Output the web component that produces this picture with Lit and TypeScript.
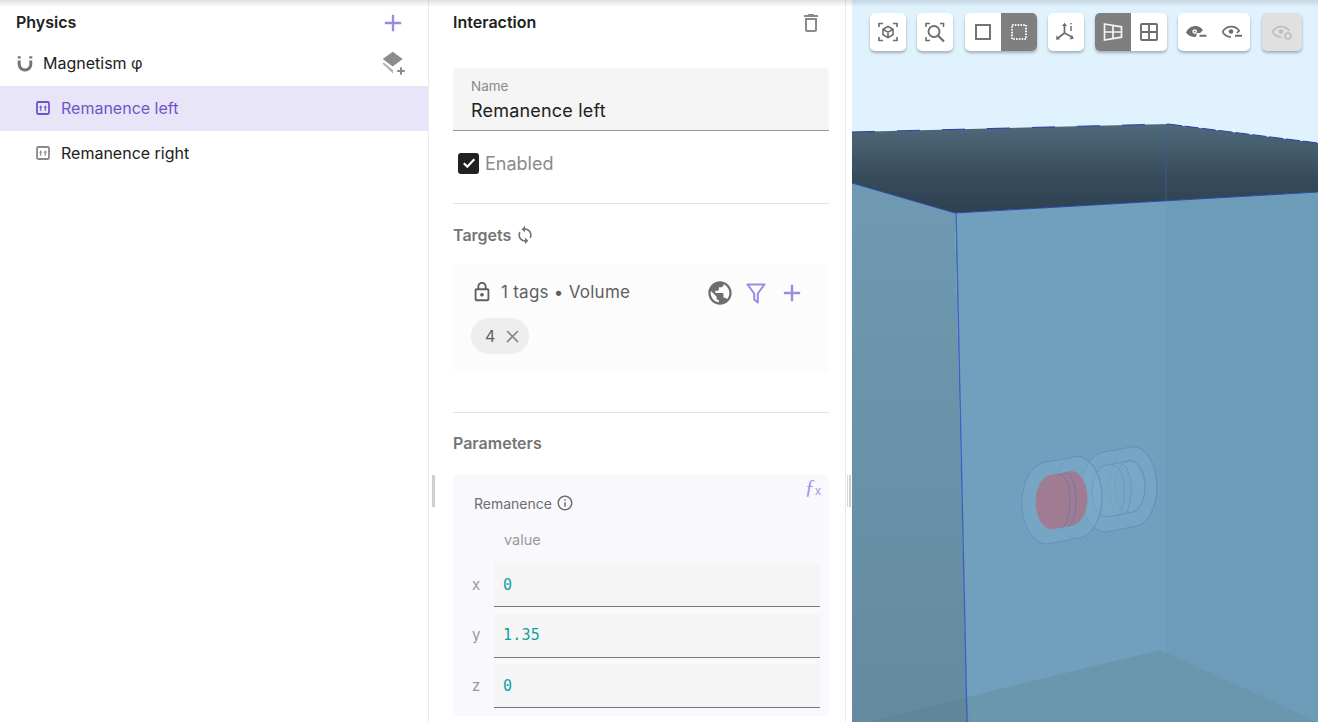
import { LitElement, html, css, svg } from "lit";
import { customElement } from "lit/decorators.js";

const P = {
  add: "M19 13h-6v6h-2v-6H5v-2h6V5h2v6h6v2z",
  trash: "M6 19c0 1.1.9 2 2 2h8c1.1 0 2-.9 2-2V7H6v12zM8 9h8v10H8V9zm7.5-5l-1-1h-5l-1 1H5v2h14V4h-3.5z",
  lock: "M18 8h-1V6c0-2.76-2.24-5-5-5S7 3.24 7 6v2H6c-1.1 0-2 .9-2 2v10c0 1.1.9 2 2 2h12c1.1 0 2-.9 2-2V10c0-1.1-.9-2-2-2zM9 6c0-1.66 1.34-3 3-3s3 1.34 3 3v2H9V6zm9 14H6V10h12v10zm-6-3c1.1 0 2-.9 2-2s-.9-2-2-2-2 .9-2 2 .9 2 2 2z",
  globe: "M12 2C6.48 2 2 6.48 2 12s4.48 10 10 10 10-4.48 10-10S17.52 2 12 2zm-1 17.93c-3.95-.49-7-3.85-7-7.93 0-.62.08-1.21.21-1.79L9 15v1c0 1.1.9 2 2 2v1.93zm6.9-2.54c-.26-.81-1-1.39-1.9-1.39h-1v-3c0-.55-.45-1-1-1H8v-2h2c.55 0 1-.45 1-1V7h2c1.1 0 2-.9 2-2v-.41c2.93 1.19 5 4.06 5 7.41 0 2.08-.8 3.97-2.1 5.39z",
  sync: "M12 4V1L8 5l4 4V6c3.31 0 6 2.69 6 6 0 1.01-.25 1.97-.7 2.8l1.46 1.46C19.54 15.03 20 13.57 20 12c0-4.42-3.58-8-8-8zm0 14c-3.31 0-6-2.69-6-6 0-1.01.25-1.97.7-2.8L5.24 7.74C4.46 8.97 4 10.43 4 12c0 4.42 3.58 8 8 8v3l4-4-4-4v3z",
  info: "M11 7h2v2h-2zm0 4h2v6h-2zm1-9C6.48 2 2 6.48 2 12s4.48 10 10 10 10-4.48 10-10S17.52 2 12 2zm0 18c-4.41 0-8-3.59-8-8s3.59-8 8-8 8 3.59 8 8-3.59 8-8 8z",
  close: "M19 6.41L17.59 5 12 10.59 6.41 5 5 6.41 10.59 12 5 17.59 6.41 19 12 13.41 17.59 19 19 17.59 13.41 12z",
};

const icon = (d: string, size: number, color: string) => html`<svg width=${size} height=${size} viewBox="0 0 24 24" fill=${color}><path d=${d}></path></svg>`;

const filterIcon = html`<svg width="28" height="28" viewBox="0 0 28 28" fill="none"><path d="M5.500 5.500h17L15.800 14.500v9l-3.600-3v-6z" stroke="#9b8be0" stroke-width="2" stroke-linejoin="round"/></svg>`;
const magnet = html`<svg width="18" height="18" viewBox="0 0 18 18" fill="none"><path d="M3.2 6.5v3.800a5.800 5.800 0 0 0 11.600 0V6.500" stroke="#757575" stroke-width="3"/><path d="M3.2 2.200v2.400M14.800 2.200v2.400" stroke="#757575" stroke-width="3"/></svg>`;
const layersAdd = html`<svg width="26" height="26" viewBox="0 0 26 26" fill="#8c8c8c"><path d="M13.700 1.700l10 7.400-5 3.700-5 3.700-10-7.400z"/><path d="M3.700 13.700l1-1.200 9.300 7.700v3.300z" opacity=".7"/><path d="M21 17.300h2v2.600h2.800v2H23v2.800h-2v-2.800h-2.800v-2H21z"/></svg>`;
const boxArrows = (c: string) => html`<svg width="14" height="14" viewBox="0 0 14 14" fill="none"><rect x="1" y="1" width="12" height="12" rx="1.200" stroke=${c} stroke-width="1.800"/><path d="M4.700 9.800V6.400M9.300 9.800V6.400" stroke=${c} stroke-width="1.200"/><path d="M3 6.800l1.700-2.600 1.700 2.600zM7.600 6.800l1.700-2.600L11 6.800z" fill=${c}/></svg>`;

const tb = (inner: unknown, color = "#6e6e6e") => html`<svg width="24" height="24" viewBox="0 0 24 24" fill="none" stroke=${color} stroke-width="1.700">${inner}</svg>`;
const corners = svg`<path d="M3 7V3.500h4M17 3.500h4V7M21 17v3.500h-4M7 20.500H3V17" stroke-width="1.600"/>`;

const icons = {
  cube: tb(svg`${corners}<path d="M12 6.500l5 2.800v5.500l-5 2.800-5-2.800V9.300zM7 9.300l5 2.800 5-2.800M12 12.100v5.500" stroke-width="1.600"/>`),
  zoom: tb(svg`<path d="M3 7V3.500h4M17 3.500h3.500V7M3 17v3.500h4" stroke-width="1.600"/><circle cx="11" cy="11.500" r="5.500" stroke-width="1.900"/><path d="M15 15.500l6 6" stroke-width="2.200"/>`),
  square: tb(svg`<rect x="5" y="5" width="14" height="14" stroke-width="1.900"/>`),
  dotted: tb(svg`<rect x="5" y="5" width="14" height="14" stroke-width="2" stroke-dasharray="1.600 1.200"/>`, "#f4f4f4"),
  axes: tb(svg`<path d="M10.500 13V4M10.500 13l-6.500 5M10.500 13l7.500 4" stroke-width="1.800"/><path d="M8 6l2.500-3.200L13 6zM2.500 15.500l-.5 4.300 4.200-.5zM15.500 19.500l4.300-.8-1.700-3.800z" fill="#6e6e6e" stroke="none"/><path d="M17 3v1.200M17 6v5" stroke-width="1.500"/>`),
  persp: tb(svg`<path d="M3.500 4l17 2.800v10.400L3.500 20zM3.500 12h17M12 5.500v13" stroke-width="1.700"/>`, "#f4f4f4"),
  grid: tb(svg`<rect x="4" y="4" width="16" height="16" rx="1" stroke-width="1.900"/><path d="M12 4v16M4 12h16" stroke-width="1.900"/>`),
  eyeFill: tb(svg`<path d="M2 12.500C4 8 8 6 11.500 6c2.900 0 5.500 1.400 7.500 4.200l-3 2.800H12.800c0 1-.3 2.800-1.300 4C7.500 17 4 15.500 2 12.500z" fill="#6e6e6e" stroke="none"/><circle cx="10.700" cy="11.600" r="2.300" fill="#fff" stroke="none"/><circle cx="10.700" cy="11.600" r=".9" fill="#6e6e6e" stroke="none"/><path d="M15.500 15.800h7" stroke-width="2"/>`),
  eyeLine: tb(svg`<path d="M2.500 12C4.500 8.300 8 6.700 11.500 6.700c3 0 5.800 1.500 7.600 4.100l-2.200 2M11 17c-3.500-.200-6.600-2-8.500-5" stroke-width="1.700"/><circle cx="11" cy="11.500" r="2.300" fill="#6e6e6e" stroke="none"/><path d="M15 15.800h7" stroke-width="2"/>`),
  eyeOff: tb(svg`<path d="M2.500 12C4.500 8.300 8 6.700 11.500 6.700c3 0 5.800 1.500 7.600 4.100M11 17c-3.500-.200-6.600-2-8.500-5" stroke-width="1.700"/><circle cx="11" cy="11.500" r="2.300" fill="#bdbdbd" stroke="none"/><circle cx="18" cy="16" r="3" stroke-width="1.500"/>`, "#bdbdbd"),
};

const cylinder = (cx0: number, cy0: number, w: number, rx: number, ry: number, fill: string, stroke = "#5b80c0", so = 0.55) => {
  const dy = -w * 0.19;
  const x1 = cx0 + w;
  const y1 = cy0 + dy;
  return svg`<path d="M${cx0} ${cy0 - ry}L${x1} ${y1 - ry}A${rx} ${ry} 0 0 1 ${x1} ${y1 + ry}L${cx0} ${cy0 + ry}A${rx} ${ry} 0 0 1 ${cx0} ${cy0 - ry}Z" fill=${fill} stroke=${stroke} stroke-opacity=${so} stroke-width="1"/>
  <ellipse cx=${x1} cy=${y1} rx=${rx} ry=${ry} fill="none" stroke=${stroke} stroke-opacity=${so * 0.4}/>`;
};

const scene = svg`<svg class="scene" viewBox="852 0 466 722" width="466" height="722">
  <defs>
    <linearGradient id="top" x1="0" y1="0" x2="0" y2="1"><stop offset="0" stop-color="#506a7b"/><stop offset=".6" stop-color="#364b5a"/><stop offset="1" stop-color="#2f4150"/></linearGradient>
    <linearGradient id="lw" x1="0" y1="0" x2="0" y2="1"><stop offset="0" stop-color="#6f9ab1"/><stop offset="1" stop-color="#648a9f"/></linearGradient>
  </defs>
  <rect x="852" y="0" width="466" height="722" fill="#e0f2fe"/>
  <polygon points="852,132 1168,124 1318,143 1318,192 955,213 852,183" fill="url(#top)"/>
  <polygon points="852,183 955,213 967,722 852,722" fill="url(#lw)"/>
  <polygon points="955,213 1318,192 1318,722 967,722" fill="#70a0bd"/>
  <polygon points="1166,200.800 1318,192 1318,722 1166,722" fill="#6d9cb9"/>
  <polygon points="868,722 967,697 969,722" fill="#618699"/>
  <polygon points="967,697 1160,650 1318,722 969,722" fill="#6a97ae"/>
  <path d="M852 132L1168 124" stroke="#2a3ea6" stroke-width="1" stroke-dasharray="23 22"/>
  <path d="M1168 124L1318 143" stroke="#2a3ea6" stroke-width="1" stroke-dasharray="14 3"/>
  <path d="M852 183L955 213L1318 192" stroke="#2b45a8" stroke-width="1" fill="none"/>
  <path d="M1166 125V200" stroke="#3a5f9c" stroke-width="1" stroke-opacity=".7"/>
  <path d="M956 213L967 722" stroke="#3d62c4" stroke-width="1.400"/>
  ${cylinder(1105, 492, 28, 24, 40, "#7fb0cc66")}
  ${cylinder(1107, 491, 23, 15, 26, "#7fb0cc40")}
  <path d="M1113 466A10 26 0 0 1 1118 516M1121 464A10 26 0 0 1 1125 514" fill="none" stroke="#6a8cc0" stroke-opacity=".7"/>
  ${cylinder(1047, 503, 30, 25, 41, "#7fb0cc66")}
  ${cylinder(1052, 502, 19, 16, 27, "#a07c92", "#a07c92", 0.6)}
  <path d="M1058 475A10 27 0 0 1 1062 528M1064 474A10 27 0 0 1 1068 527" fill="none" stroke="#6a74b0" stroke-opacity=".8"/>
</svg>`;

@customElement("app-root")
export class AppRoot extends LitElement {
  static styles = css`
    :host { display: block; width: 1318px; height: 722px; overflow: hidden; position: relative; background: #fff; font-family: Inter, "Noto Sans", sans-serif; color: #212121; }
    svg { display: block; flex: none; }
    .page { display: flex; height: 722px; }
    .shade { position: absolute; left: 0; right: 0; top: 0; height: 7px; background: linear-gradient(rgba(0,0,0,.12), rgba(0,0,0,0)); pointer-events: none; z-index: 3; }
    .left { width: 428px; flex: none; border-right: 1px solid #ececec; }
    .lhead { height: 44px; display: flex; align-items: center; justify-content: space-between; padding: 0 21px 0 16px; }
    .lhead svg { margin-top: 2px; }
    h2 { margin: 0; font-size: 16px; font-weight: 600; }
    .rowp { height: 42px; box-sizing: border-box; padding: 0 23px 4px 16px; display: flex; align-items: center; font-size: 16px; gap: 9px; }
    .rowp span { flex: 1; }
    .item { height: 45px; box-sizing: border-box; padding: 0 0 2px 36px; display: flex; align-items: center; gap: 11px; font-size: 16px; }
    .item.sel { background: #e9e5f8; color: #6f55c9; }
    .mid { width: 417px; flex: none; box-sizing: border-box; padding: 0 16px 0 24px; border-right: 1px solid #ececec; position: relative; overflow: hidden; }
    .handle { position: absolute; left: 3px; top: 475px; width: 3px; height: 32px; background: #d0d0d0; }
    .mhead { height: 44px; display: flex; align-items: center; justify-content: space-between; padding-right: 6px; }
    .mhead svg { margin-top: 2px; }
    .field { margin-top: 24px; height: 63px; box-sizing: border-box; background: #f5f5f5; border-bottom: 1px solid #999; border-radius: 4px 4px 0 0; padding: 10px 18px 0; }
    .field small { display: block; font-size: 13.500px; line-height: 17px; color: #8a8a8a; }
    .field div { font-size: 18px; line-height: 26px; margin-top: 3px; letter-spacing: .2px; }
    .check { margin-top: 14px; height: 36px; display: flex; align-items: center; gap: 6px; padding-left: 5px; color: #8a8a8a; font-size: 18px; }
    .box { width: 21px; height: 21px; background: #212121; border-radius: 3px; display: flex; align-items: center; justify-content: center; }
    .rule { height: 1px; background: #e2e2e2; }
    .r1 { margin-top: 22px; }
    .r2 { margin-top: 40px; }
    .sec { display: flex; align-items: center; gap: 4px; height: 24px; color: #757575; font-size: 16px; font-weight: 600; }
    .s1 { margin-top: 19px; }
    .s2 { margin-top: 18px; }
    .targets { margin-top: 17px; height: 108px; box-sizing: border-box; background: #fcfcfc; padding: 16px 23px 0 18px; border-radius: 4px; }
    .tline { display: flex; align-items: center; height: 24px; color: #5f5f5f; font-size: 17px; letter-spacing: .25px; }
    .tline span { flex: 1; margin-left: 8px; }
    .tline .acts { display: flex; gap: 8px; margin-top: 2px; }
    .chip { margin-top: 14px; width: 58px; height: 36px; box-sizing: border-box; border-radius: 18px; background: #eeeeee; display: flex; align-items: center; padding-left: 14px; gap: 7px; color: #616161; font-size: 16px; }
    .params { margin-top: 19px; height: 242px; box-sizing: border-box; background: #f9f8fc; border-radius: 6px; padding: 19px 9px 0 19px; position: relative; }
    .fx { position: absolute; right: 8px; top: 3px; color: #a594e4; font-family: "Liberation Serif", serif; font-style: italic; font-size: 21px; line-height: 20px; }
    .fx sub { font-family: "Liberation Sans", sans-serif; font-style: normal; font-size: 12px; line-height: 0; vertical-align: -1px; }
    .plabel { display: flex; align-items: center; gap: 4px; height: 20px; padding-left: 2px; font-size: 14px; color: #6e6e6e; }
    .phead { margin: 17px 0 13px 32px; height: 20px; line-height: 20px; color: #9a9a9a; font-size: 14.500px; }
    .grid { display: grid; grid-template-columns: 22px 1fr; row-gap: 6.500px; }
    .axis { align-self: center; color: #9a9a9a; font-size: 15px; padding-bottom: 2px; }
    .inp { height: 44px; box-sizing: border-box; background: #f5f5f5; border-bottom: 1px solid #777; display: flex; align-items: center; padding-left: 9px; font-family: "DejaVu Sans Mono", monospace; font-size: 15px; letter-spacing: .2px; color: #14a0a0; }
    .view { flex: 1; margin-left: 6px; position: relative; overflow: hidden; }
    .gutter { position: absolute; left: 847px; top: 475px; width: 4px; height: 32px; border-left: 1px solid #d8d8d8; border-right: 2px solid #d0d0d0; box-sizing: border-box; z-index: 1; }
    .scene { position: absolute; left: 0; top: 0; }
    .tools { position: absolute; left: 18px; top: 13px; display: flex; gap: 11px; z-index: 2; }
    .group { display: flex; height: 38px; border-radius: 5px; overflow: hidden; box-shadow: 0 2px 3px rgba(0,0,0,.28); background: #fff; }
    .btn { width: 36px; display: flex; align-items: center; justify-content: center; }
    .btn.on { background: #7f7f7f; }
    .tweak { margin-left: 1px; }
    .group.off { background: #e0e0e0; }
    .group.off .btn { width: 40px; }
  `;

  render() {
    return html`
      <div class="shade"></div>
      <div class="gutter"></div>
      <div class="page">
        <aside class="left">
          <div class="lhead"><h2>Physics</h2>${icon(P.add, 28, "#9b8be0")}</div>
          <div class="rowp">${magnet}<span>Magnetism φ</span>${layersAdd}</div>
          <div class="item sel">${boxArrows("#6f55c9")}<span>Remanence left</span></div>
          <div class="item">${boxArrows("#8a8a8a")}<span>Remanence right</span></div>
        </aside>
        <section class="mid">
          <div class="handle"></div>
          <div class="mhead"><h2>Interaction</h2>${icon(P.trash, 24, "#8a8a8a")}</div>
          <div class="field"><small>Name</small><div>Remanence left</div></div>
          <div class="check"><div class="box"><svg width="16" height="16" viewBox="0 0 16 16" fill="none"><path d="M2.800 8.300l3.500 3.400 7-7.500" stroke="#fff" stroke-width="2.200"/></svg></div>Enabled</div>
          <div class="rule r1"></div>
          <div class="sec s1">Targets ${icon(P.sync, 20, "#757575")}</div>
          <div class="targets">
            <div class="tline">${icon(P.lock, 22, "#5f5f5f")}<span>1 tags • Volume</span>
              <div class="acts">${icon(P.globe, 28, "#6e6e6e")}${filterIcon}${icon(P.add, 28, "#9b8be0")}</div>
            </div>
            <div class="chip">4 ${icon(P.close, 21, "#8a8a8a")}</div>
          </div>
          <div class="rule r2"></div>
          <div class="sec s2">Parameters</div>
          <div class="params">
            <div class="fx">ƒ<sub>x</sub></div>
            <div class="plabel">Remanence ${icon(P.info, 18, "#6e6e6e")}</div>
            <div class="phead">value</div>
            <div class="grid">
              <div class="axis">x</div><div class="inp">0</div>
              <div class="axis">y</div><div class="inp">1.35</div>
              <div class="axis">z</div><div class="inp">0</div>
            </div>
          </div>
        </section>
        <main class="view">
          ${scene}
          <div class="tools">
            <div class="group"><div class="btn">${icons.cube}</div></div>
            <div class="group"><div class="btn">${icons.zoom}</div></div>
            <div class="group tweak"><div class="btn">${icons.square}</div><div class="btn on">${icons.dotted}</div></div>
            <div class="group"><div class="btn">${icons.axes}</div></div>
            <div class="group"><div class="btn on">${icons.persp}</div><div class="btn">${icons.grid}</div></div>
            <div class="group"><div class="btn">${icons.eyeFill}</div><div class="btn">${icons.eyeLine}</div></div>
            <div class="group off tweak"><div class="btn">${icons.eyeOff}</div></div>
          </div>
        </main>
      </div>
    `;
  }
}
